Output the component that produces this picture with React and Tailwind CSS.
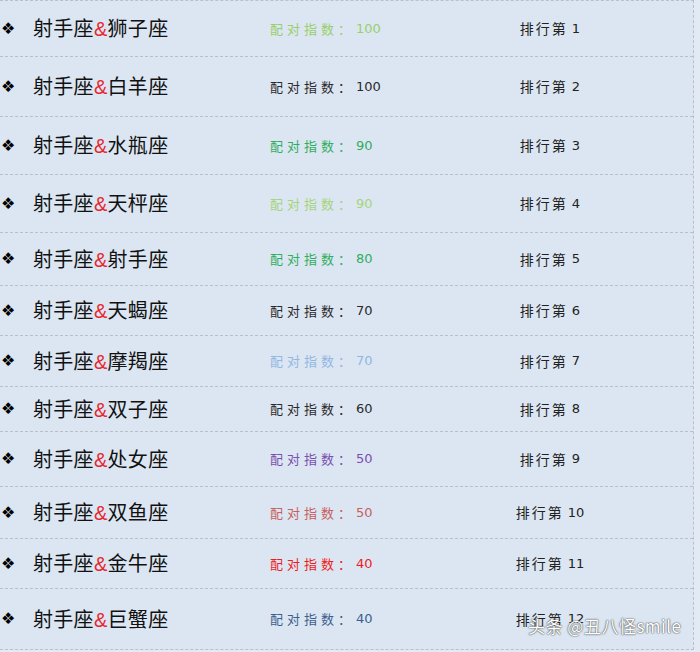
const rows = [
  { name: '狮子座', score: 100, rank: 1, h: 'h-[55px]', color: 'text-[#98cf6a]' },
  { name: '白羊座', score: 100, rank: 2, h: 'h-[60px]', color: 'text-[#2a2a2a]' },
  { name: '水瓶座', score: 90, rank: 3, h: 'h-[58px]', color: 'text-[#2fae5e]' },
  { name: '天枰座', score: 90, rank: 4, h: 'h-[58px]', color: 'text-[#a6d47c]' },
  { name: '射手座', score: 80, rank: 5, h: 'h-[53px]', color: 'text-[#2fae5e]' },
  { name: '天蝎座', score: 70, rank: 6, h: 'h-[50px]', color: 'text-[#2a2a2a]' },
  { name: '摩羯座', score: 70, rank: 7, h: 'h-[51px]', color: 'text-[#92b8e2]' },
  { name: '双子座', score: 60, rank: 8, h: 'h-[45px]', color: 'text-[#2a2a2a]' },
  { name: '处女座', score: 50, rank: 9, h: 'h-[55px]', color: 'text-[#7a4fb0]' },
  { name: '双鱼座', score: 50, rank: 10, h: 'h-[52px]', color: 'text-[#c8605c]' },
  { name: '金牛座', score: 40, rank: 11, h: 'h-[50px]', color: 'text-[#f01c1c]' },
  { name: '巨蟹座', score: 40, rank: 12, h: 'h-[61px]', color: 'text-[#3b5f8f]' },
]

const cjk = "font-['Noto_Sans_CJK_SC',sans-serif]"

export default function App() {
  return (
    <div className="relative w-[700px] h-[652px] bg-[#e3eaf4] overflow-hidden">
      <div className="w-[694px] bg-[#dce6f2] border-t border-r border-b border-dashed border-[#b9c0ca]">
        {rows.map((r, i) => (
          <div
            key={r.rank}
            className={`${r.h} flex items-center ${i > 0 ? 'border-t border-dashed border-[#b9c0ca]' : ''}`}
          >
            <span className="w-[33px] pl-[1px] text-[16px] leading-none text-black font-['DejaVu_Sans',sans-serif]">❖</span>
            <span className={`w-[237px] text-[20px] text-[#111] tracking-[0.3px] ${cjk}`}>
              射手座<span className="text-[#e8262e] font-['Liberation_Sans',sans-serif]">&amp;</span>{r.name}
            </span>
            <span className={`w-[170px] flex items-center ${r.color}`}>
              <span className={`text-[13px] tracking-[4px] ${cjk}`}>配对指数：</span>
              <span className="ml-[1px] text-[13px] font-['DejaVu_Sans',sans-serif]">{r.score}</span>
            </span>
            <span className="w-[220px] flex items-center justify-center text-[#222]">
              <span className={`text-[14px] tracking-[2px] ${cjk}`}>排行第</span>
              <span className="ml-[4px] text-[13px] font-['DejaVu_Sans',sans-serif]">{r.rank}</span>
            </span>
          </div>
        ))}
      </div>
      <div className={`absolute left-[528px] top-[613px] text-[17px] tracking-[0.5px] text-white ${cjk} [text-shadow:0_0_2px_#555,0_0_1px_#333]`}>
        头条 @丑八怪smile
      </div>
    </div>
  )
}
